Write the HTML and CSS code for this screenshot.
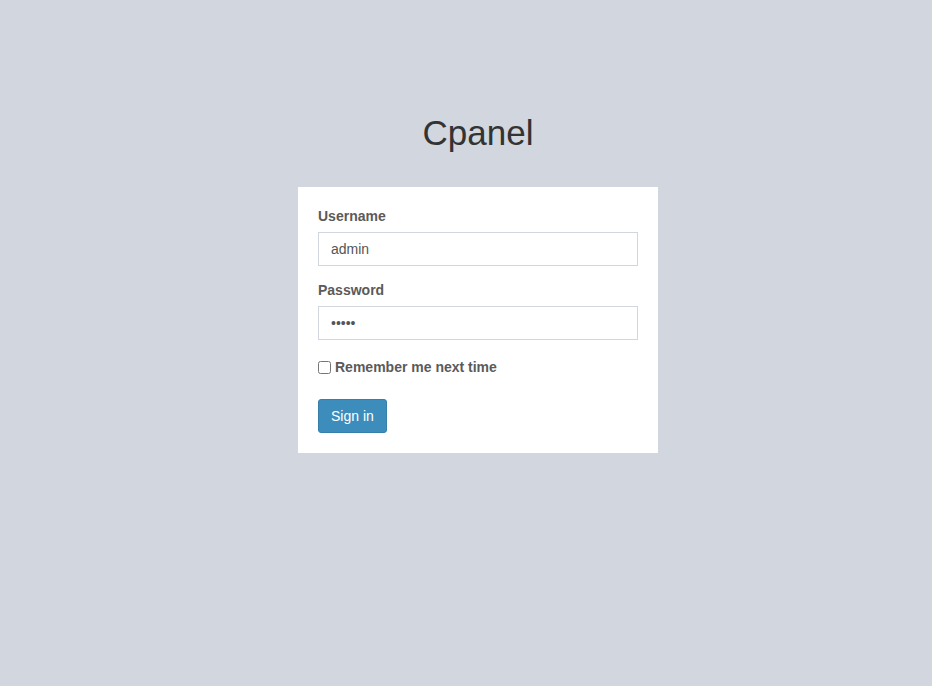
FILE: index.html
```html
<!DOCTYPE html>
<html>
<head>
<meta charset="utf-8">
<title>Cpanel</title>
<link rel="stylesheet" href="styles.css">
</head>
<body>
<div class="login-box">
  <div class="login-logo">Cpanel</div>
  <form class="login-body">
    <div class="form-group">
      <label class="field-label" for="username">Username</label>
      <input class="form-control" id="username" type="text" value="admin">
    </div>
    <div class="form-group">
      <label class="field-label" for="password">Password</label>
      <input class="form-control" id="password" type="password" value="admin">
    </div>
    <div class="checkbox-row">
      <label class="check-label"><input type="checkbox" class="check"> Remember me next time</label>
    </div>
    <button type="button" class="btn-primary">Sign in</button>
  </form>
</div>
</body>
</html>
```
FILE: styles.css
```css
html, body {
  margin: 0;
  padding: 0;
}
body {
  background: #d2d6de;
  font-family: "Liberation Sans", Arial, sans-serif;
  font-size: 14px;
  line-height: 20px;
  color: #333;
  min-height: 686px;
  padding-left: 24px;
}
.login-box {
  width: 360px;
  margin: 0 auto;
  padding-top: 108px;
}
.login-logo {
  font-size: 35px;
  line-height: 50px;
  text-align: center;
  color: #333;
  margin-bottom: 29px;
}
.login-body {
  background: #fff;
  padding: 19px 20px 20px;
  margin: 0;
}
.form-group {
  margin-bottom: 14px;
}
.field-label {
  display: block;
  font-weight: bold;
  color: #5a5a5a;
  margin-bottom: 6px;
}
.form-control {
  display: block;
  box-sizing: border-box;
  width: 100%;
  height: 34px;
  padding: 6px 12px;
  border: 1px solid #d2d6de;
  border-radius: 0;
  font-family: "Liberation Sans", Arial, sans-serif;
  font-size: 14px;
  color: #555;
  background: #fff;
  outline: none;
}
.checkbox-row {
  margin-top: 17px;
  margin-bottom: 22px;
  height: 20px;
}
.check-label {
  font-weight: bold;
  color: #5a5a5a;
  display: flex;
  align-items: center;
}
.check {
  margin: 0 4px 0 0;
  width: 13px;
  height: 13px;
}
.btn-primary {
  display: block;
  background: #3c8dbc;
  border: 1px solid #367fa9;
  border-radius: 3px;
  color: #fff;
  font-family: "Liberation Sans", Arial, sans-serif;
  font-size: 14px;
  line-height: 20px;
  padding: 6px 12px;
  cursor: pointer;
}
```
